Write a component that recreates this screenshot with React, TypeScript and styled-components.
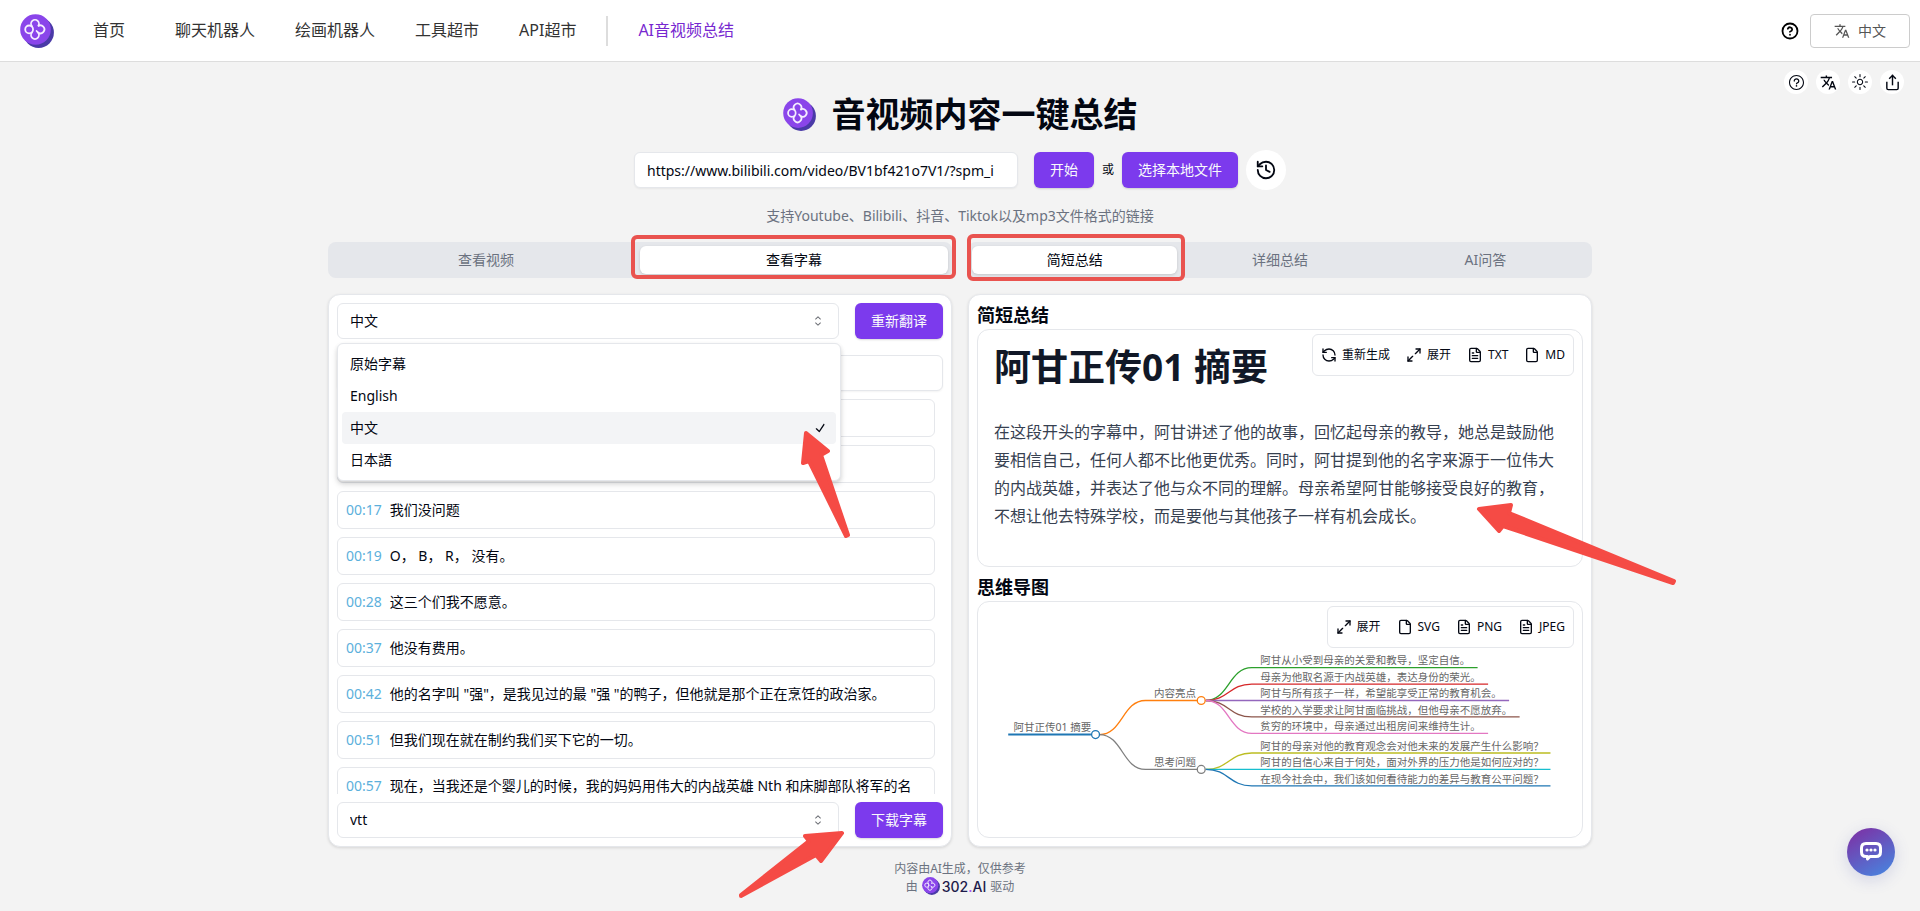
import React from 'react';
import styled, { createGlobalStyle } from 'styled-components';
import { History, RefreshCcw, Maximize2, FileText, File as FileIcon, CircleHelp, Share } from 'lucide-react';
import { RxCaretSort, RxCheck, RxQuestionMarkCircled, RxSun } from 'react-icons/rx';
import { MdTranslate } from 'react-icons/md';

const PURPLE = '#7c3aed';
const LINE = '#e5e7eb';
const INK = '#030712';
const MUTED = '#6b7280';
const MARK = '#f54b45';

const GlobalStyle = createGlobalStyle`
  *, *::before, *::after { box-sizing: border-box; }
  body {
    margin: 0;
    background: #f3f3f3;
    color: ${INK};
    font-family: "Noto Sans", "Noto Sans CJK SC", sans-serif;
    font-size: 14px;
    line-height: 20px;
  }
  button, input, select { font: inherit; color: inherit; margin: 0; }
  h1, h2, p, ul { margin: 0; padding: 0; }
  ul { list-style: none; }
`;

const Header = styled.header`
  display: flex;
  align-items: center;
  height: 62px;
  padding: 0 10px 0 20px;
  background: #fff;
  border-bottom: 1px solid #ddd;
`;

const HomeLink = styled.a`
  display: flex;
  margin-right: 39px;
`;

const Nav = styled.nav`
  display: flex;
  align-items: center;
  gap: 40px;
  flex: 1;
`;

const NavLink = styled.a<{ $active?: boolean; $first?: boolean }>`
  padding-bottom: 2px;
  font-size: 16px;
  line-height: 24px;
  text-decoration: none;
  color: ${(p) => (p.$active ? '#7728d0' : '#333')};
  margin-right: ${(p) => (p.$first ? '10px' : '0')};
`;

const NavDivider = styled.span`
  width: 2px;
  height: 30px;
  margin: 0 -10px;
  background: #ddd;
`;

const HelpLink = styled.a`
  display: flex;
  margin-right: 11px;
  color: #000;
`;

const LanguageButton = styled.button`
  display: flex;
  align-items: center;
  justify-content: center;
  gap: 8px;
  width: 100px;
  height: 34px;
  border: 1px solid #ccc;
  border-radius: 4px;
  background: #fff;
  color: #555;
`;

const Actions = styled.div`
  display: flex;
  justify-content: flex-end;
  gap: 8px;
  padding: 8px 16px 0;
`;

const RoundButton = styled.button<{ $size: number }>`
  display: flex;
  align-items: center;
  justify-content: center;
  flex: none;
  width: ${(p) => p.$size}px;
  height: ${(p) => p.$size}px;
  padding: 0;
  border: 0;
  border-radius: 50%;
  background: #fff;
`;

const Main = styled.main`
  max-width: 1280px;
  margin: 0 auto;
  padding: 0 8px;
`;

const TitleRow = styled.div`
  display: flex;
  align-items: center;
  justify-content: center;
  gap: 16px;
  margin-bottom: 16px;
`;

const Title = styled.h1`
  font-size: 34px;
  line-height: 40px;
  font-weight: 700;
`;

const SourceForm = styled.form`
  display: flex;
  align-items: center;
  justify-content: center;
  gap: 8px;
  margin-bottom: 16px;
`;

const TextInput = styled.input`
  width: 100%;
  height: 36px;
  flex: none;
  padding: 0 12px;
  border: 1px solid ${LINE};
  border-radius: 6px;
  background: #fff;
  box-shadow: 0 1px 2px rgba(0, 0, 0, 0.05);
`;

const UrlInput = styled(TextInput)`
  width: 384px;
  margin-right: 8px;
`;

const PrimaryButton = styled.button`
  flex: none;
  height: 36px;
  padding: 0 16px;
  border: 0;
  border-radius: 6px;
  background: ${PURPLE};
  color: #f9fafb;
  box-shadow: 0 1px 2px rgba(0, 0, 0, 0.15);
`;

const OrText = styled.span`
  font-size: 12px;
`;

const Hint = styled.p`
  margin-bottom: 16px;
  text-align: center;
  color: ${MUTED};
`;

const Columns = styled.div`
  display: grid;
  grid-template-columns: 1fr 1fr;
  gap: 16px;
`;

const TabBar = styled.div`
  display: flex;
  height: 36px;
  padding: 4px;
  border-radius: 8px;
  background: ${LINE};
`;

const Tab = styled.button<{ $active?: boolean }>`
  position: relative;
  flex: 1;
  padding: 0;
  border: 0;
  border-radius: 6px;
  background: ${(p) => (p.$active ? '#fff' : 'transparent')};
  color: ${(p) => (p.$active ? INK : MUTED)};
  box-shadow: ${(p) => (p.$active ? '0 1px 3px rgba(0, 0, 0, 0.15)' : 'none')};
`;

const MarkBox = styled.span<{ $inset: string }>`
  position: absolute;
  inset: ${(p) => p.$inset};
  border: 4px solid #e9534f;
  border-radius: 6px;
  pointer-events: none;
`;

const Panel = styled.section`
  position: relative;
  display: flex;
  flex-direction: column;
  height: calc(100vh - 358px);
  min-height: 553px;
  padding: 8px;
  border: 1px solid ${LINE};
  border-radius: 12px;
  background: #fff;
  box-shadow: 0 1px 3px rgba(0, 0, 0, 0.12);
`;

const PickerRow = styled.div`
  display: flex;
  gap: 16px;
`;

const Picker = styled.div`
  position: relative;
  flex: 1;
`;

const SelectBox = styled.select`
  appearance: none;
  display: block;
  width: 100%;
  height: 36px;
  padding: 0 12px;
  border: 1px solid ${LINE};
  border-radius: 6px;
  background: #fff;
`;

const SelectCaret = styled(RxCaretSort)`
  position: absolute;
  top: 10px;
  right: 13px;
  opacity: 0.6;
  pointer-events: none;
`;

const OptionMenu = styled.ul`
  position: absolute;
  z-index: 1;
  top: 40px;
  left: 0;
  right: -2px;
  padding: 4px;
  border: 1px solid ${LINE};
  border-radius: 6px;
  background: #fff;
  box-shadow: 0 4px 6px rgba(0, 0, 0, 0.1), 0 2px 4px rgba(0, 0, 0, 0.1);
`;

const Option = styled.li<{ $selected: boolean }>`
  display: flex;
  align-items: center;
  justify-content: space-between;
  height: 32px;
  padding: 0 8px;
  border-radius: 4px;
  background: ${(p) => (p.$selected ? '#f3f4f6' : 'transparent')};
`;

const FilterInput = styled(TextInput)`
  margin: 16px 0 8px;
`;

const CueList = styled.ul`
  display: flex;
  flex-direction: column;
  gap: 8px;
  flex: 1;
  min-height: 0;
  margin-bottom: 8px;
  padding-right: 8px;
  overflow: hidden;
`;

const Cue = styled.li`
  display: flex;
  gap: 8px;
  flex: none;
  min-height: 38px;
  padding: 8px;
  border: 1px solid ${LINE};
  border-radius: 6px;
`;

const CueTime = styled.span`
  flex: none;
  color: #5cb0dc;
`;

const CardTitle = styled.h2`
  padding-bottom: 2px;
  font-size: 18px;
  line-height: 24px;
  font-weight: 700;
`;

const Card = styled.div`
  position: relative;
  flex: 1;
  border: 1px solid ${LINE};
  border-radius: 12px;

  & + ${CardTitle} { margin-top: 8px; }
`;

const CardTools = styled.div`
  position: absolute;
  top: 4px;
  right: 8px;
  display: flex;
  gap: 16px;
  padding: 12px 8px;
  border: 1px solid ${LINE};
  border-radius: 6px;
  background: #fff;
`;

const ToolButton = styled.button`
  display: flex;
  align-items: center;
  gap: 5px;
  padding: 0;
  border: 0;
  background: none;
  font-size: 12px;
  line-height: 16px;
`;

const Article = styled.article`
  padding: 16px;
`;

const ArticleTitle = styled.h1`
  margin-bottom: 30px;
  font-size: 37px;
  line-height: 42px;
  font-weight: 700;
  color: #111827;
`;

const ArticleText = styled.p`
  font-size: 16px;
  line-height: 28px;
  color: #374151;
`;

const MindMapSvg = styled.svg`
  display: block;
  width: 100%;
  font-size: 16px;
  fill: none;
  stroke-width: 2;

  text { fill: #666; stroke: none; }
  circle { fill: #fff; }
`;

const Footer = styled.footer`
  display: flex;
  flex-direction: column;
  align-items: center;
  padding: 13px 0 16px;
  font-size: 12px;
  line-height: 17px;
  color: ${MUTED};
`;

const Brand = styled.div`
  display: flex;
  align-items: center;
  gap: 4px;
`;

const BrandName = styled.a`
  display: flex;
  align-items: center;
  gap: 2px;
  font-family: Inter, "Noto Sans", sans-serif;
  font-size: 14px;
  font-weight: 500;
  text-decoration: none;
  color: #1e1b4b;
`;

const BrandDot = styled.span`
  color: #a855f7;
`;

const ChatButton = styled.button`
  position: fixed;
  right: 25px;
  bottom: 35px;
  display: flex;
  align-items: center;
  justify-content: center;
  width: 48px;
  height: 48px;
  padding: 0;
  border: 0;
  border-radius: 50%;
  background: linear-gradient(150deg, #7a35a8 10%, #4a80dc 90%);
  box-shadow: 0 4px 16px rgba(80, 90, 180, 0.2);
`;

const ArrowSvg = styled.svg<{ $left: number; $top: number }>`
  position: absolute;
  z-index: 2;
  left: ${(p) => p.$left}px;
  top: ${(p) => p.$top}px;
  overflow: visible;
  pointer-events: none;
  fill: ${MARK};
  stroke: ${MARK};
  stroke-width: 4;
  stroke-linejoin: round;
`;

function Logo({ size }: { size: number }) {
  return (
    <svg width={size} height={size} viewBox="0 0 32 32" aria-hidden="true">
      <circle cx="17.5" cy="17.5" r="14.4" fill="#4a3aa7" />
      <circle cx="14.6" cy="14.6" r="14.4" fill="#8a45ea" />
      <g fill="none" stroke="#f5eeff" strokeWidth="1.7" strokeLinecap="round">
        <path d="M11.3 11.6A3.7 3.7 0 1 1 16.9 11.6A3.7 3.7 0 1 1 16.9 17.4A3.7 3.7 0 1 1 11.3 17.4" />
        <circle cx="8.6" cy="14.5" r="3.7" />
        <path d="M16.9 17.4L15.6 16" />
      </g>
    </svg>
  );
}

const languages = ['原始字幕', 'English', '中文', '日本語'];

const cues = [
  ['', ''],
  ['', ''],
  ['00:17', '我们没问题'],
  ['00:19', 'O， B， R， 没有。'],
  ['00:28', '这三个们我不愿意。'],
  ['00:37', '他没有费用。'],
  ['00:42', '他的名字叫 "强"，是我见过的最 "强 "的鸭子，但他就是那个正在烹饪的政治家。'],
  ['00:51', '但我们现在就在制约我们买下它的一切。'],
  ['00:57', '现在，当我还是个婴儿的时候，我的妈妈用伟大的内战英雄 Nth 和床脚部队将军的名'],
];

const branches = [
  {
    label: '内容亮点',
    y: 150,
    color: '#ff7f0e',
    leaves: [
      { text: '阿甘从小受到母亲的关爱和教导，坚定自信。', y: 100, end: 761, color: '#2ca02c' },
      { text: '母亲为他取名源于内战英雄，表达身份的荣光。', y: 125, end: 777, color: '#d62728' },
      { text: '阿甘与所有孩子一样，希望能享受正常的教育机会。', y: 150, end: 809, color: '#9467bd' },
      { text: '学校的入学要求让阿甘面临挑战，但他母亲不愿放弃。', y: 175, end: 825, color: '#8c564b' },
      { text: '贫穷的环境中，母亲通过出租房间来维持生计。', y: 200, end: 777, color: '#e377c2' },
    ],
  },
  {
    label: '思考问题',
    y: 255,
    color: '#7f7f7f',
    leaves: [
      { text: '阿甘的母亲对他的教育观念会对他未来的发展产生什么影响？', y: 230, end: 872, color: '#bcbd22' },
      { text: '阿甘的自信心来自于何处，面对外界的压力他是如何应对的？', y: 255, end: 872, color: '#17becf' },
      { text: '在现今社会中，我们该如何看待能力的差异与教育公平问题？', y: 280, end: 872, color: '#1f77b4' },
    ],
  },
];

function MindMap() {
  return (
    <MindMapSvg viewBox="0 0 920 340" role="img" aria-label="思维导图">
      <path d="M46 202H172" stroke="#1f77b4" strokeWidth="3" />
      <text x="54" y="197">阿甘正传01 摘要</text>
      {branches.map((b) => (
        <g key={b.label}>
          <path d={`M185 202C220 202 220 ${b.y} 255 ${b.y}H334`} stroke={b.color} />
          <text x="268" y={b.y - 5}>{b.label}</text>
          {b.leaves.map((l) => (
            <g key={l.text}>
              <path d={`M347 ${b.y}C382 ${b.y} 382 ${l.y} 417 ${l.y}H${l.end}`} stroke={l.color} />
              <text x="430" y={l.y - 5}>{l.text}</text>
            </g>
          ))}
          <circle cx="340" cy={b.y} r="6" stroke={b.color} />
        </g>
      ))}
      <circle cx="179" cy="202" r="6" stroke="#1f77b4" />
    </MindMapSvg>
  );
}

export default function App() {
  return (
    <>
      <GlobalStyle />
      <Header>
        <HomeLink href="#" aria-label="302.AI"><Logo size={34} /></HomeLink>
        <Nav>
          <NavLink href="#" $first>首页</NavLink>
          <NavLink href="#">聊天机器人</NavLink>
          <NavLink href="#">绘画机器人</NavLink>
          <NavLink href="#">工具超市</NavLink>
          <NavLink href="#">API超市</NavLink>
          <NavDivider />
          <NavLink href="#" $active>AI音视频总结</NavLink>
        </Nav>
        <HelpLink href="#" aria-label="帮助"><CircleHelp size={18} strokeWidth={2.4} /></HelpLink>
        <LanguageButton><MdTranslate size={16} />中文</LanguageButton>
      </Header>

      <Actions>
        <RoundButton $size={24} aria-label="帮助"><RxQuestionMarkCircled size={17} /></RoundButton>
        <RoundButton $size={24} aria-label="语言"><MdTranslate size={17} /></RoundButton>
        <RoundButton $size={24} aria-label="主题"><RxSun size={16} /></RoundButton>
        <RoundButton $size={24} aria-label="分享"><Share size={17} strokeLinecap="square" strokeLinejoin="miter" /></RoundButton>
      </Actions>

      <Main>
        <TitleRow>
          <Logo size={33} />
          <Title>音视频内容一键总结</Title>
        </TitleRow>

        <SourceForm onSubmit={(e) => e.preventDefault()}>
          <UrlInput aria-label="视频链接" defaultValue="https://www.bilibili.com/video/BV1bf421o7V1/?spm_i" />
          <PrimaryButton type="submit">开始</PrimaryButton>
          <OrText>或</OrText>
          <PrimaryButton type="button">选择本地文件</PrimaryButton>
          <RoundButton type="button" $size={40} aria-label="历史记录"><History size={22} /></RoundButton>
        </SourceForm>
        <Hint>支持Youtube、Bilibili、抖音、Tiktok以及mp3文件格式的链接</Hint>

        <Columns>
          <TabBar role="tablist">
            <Tab role="tab">查看视频</Tab>
            <Tab role="tab" aria-selected $active>
              查看字幕
              <MarkBox $inset="-11px -8px -5px -9px" />
            </Tab>
          </TabBar>
          <TabBar role="tablist">
            <Tab role="tab" aria-selected $active>
              简短总结
              <MarkBox $inset="-12px -8px -7px -5px" />
            </Tab>
            <Tab role="tab">详细总结</Tab>
            <Tab role="tab">AI问答</Tab>
          </TabBar>

          <Panel>
            <PickerRow>
              <Picker>
                <SelectBox aria-label="字幕语言" defaultValue="中文">
                  {languages.map((l) => <option key={l}>{l}</option>)}
                </SelectBox>
                <SelectCaret size={16} />
                <OptionMenu role="listbox" aria-label="字幕语言">
                  {languages.map((l) => (
                    <Option key={l} role="option" aria-selected={l === '中文'} $selected={l === '中文'}>
                      {l}
                      {l === '中文' && <RxCheck size={16} />}
                    </Option>
                  ))}
                </OptionMenu>
              </Picker>
              <PrimaryButton>重新翻译</PrimaryButton>
            </PickerRow>
            <FilterInput aria-label="搜索字幕" />
            <CueList>
              {cues.map(([time, text], i) => (
                <Cue key={i}>
                  <CueTime>{time}</CueTime>
                  <span>{text}</span>
                </Cue>
              ))}
            </CueList>
            <PickerRow>
              <Picker>
                <SelectBox aria-label="字幕格式" defaultValue="vtt">
                  <option>vtt</option>
                </SelectBox>
                <SelectCaret size={16} />
              </Picker>
              <PrimaryButton>下载字幕</PrimaryButton>
            </PickerRow>
            <ArrowSvg $left={472} $top={136} width="48" height="106" aria-hidden="true">
              <path d="M5 2L27 20L20 24L47 104L45 105L8 30L2 32Z" />
            </ArrowSvg>
            <ArrowSvg $left={410} $top={535} width="106" height="68" aria-hidden="true">
              <path d="M103 3L66 6L70 11L2 65L2 66L77 25L82 31Z" />
            </ArrowSvg>
          </Panel>

          <Panel>
            <CardTitle>简短总结</CardTitle>
            <Card>
              <CardTools>
                <ToolButton><RefreshCcw size={16} />重新生成</ToolButton>
                <ToolButton><Maximize2 size={16} />展开</ToolButton>
                <ToolButton><FileText size={16} />TXT</ToolButton>
                <ToolButton><FileIcon size={16} />MD</ToolButton>
              </CardTools>
              <Article>
                <ArticleTitle>阿甘正传01 摘要</ArticleTitle>
                <ArticleText>
                  在这段开头的字幕中，阿甘讲述了他的故事，回忆起母亲的教导，她总是鼓励他要相信自己，任何人都不比他更优秀。同时，阿甘提到他的名字来源于一位伟大的内战英雄，并表达了他与众不同的理解。母亲希望阿甘能够接受良好的教育，不想让他去特殊学校，而是要他与其他孩子一样有机会成长。
                </ArticleText>
              </Article>
            </Card>
            <CardTitle>思维导图</CardTitle>
            <Card>
              <MindMap />
              <CardTools>
                <ToolButton><Maximize2 size={16} />展开</ToolButton>
                <ToolButton><FileIcon size={16} />SVG</ToolButton>
                <ToolButton><FileText size={16} />PNG</ToolButton>
                <ToolButton><FileText size={16} />JPEG</ToolButton>
              </CardTools>
            </Card>
            <ArrowSvg $left={508} $top={208} width="198" height="82" aria-hidden="true">
              <path d="M2 6L34 2L32 10L197 78L196 80L26 23L22 28Z" />
            </ArrowSvg>
          </Panel>
        </Columns>
      </Main>

      <Footer>
        <span>内容由AI生成，仅供参考</span>
        <Brand>
          由
          <BrandName href="#"><Logo size={18} /><span>302<BrandDot>.</BrandDot>AI</span></BrandName>
          驱动
        </Brand>
      </Footer>

      <ChatButton aria-label="在线客服">
        <svg width="24" height="22" viewBox="0 0 24 22" aria-hidden="true">
          <path d="M7 2.5H17Q21.5 2.5 21.5 7V11Q21.5 15.5 17 15.5H11L8.5 18V15.5H7Q2.5 15.5 2.5 11V7Q2.5 2.5 7 2.5Z" fill="none" stroke="#fff" strokeWidth="3" strokeLinejoin="round" />
          <circle cx="8" cy="9" r="1.6" fill="#fff" />
          <circle cx="12" cy="9" r="1.6" fill="#fff" />
          <circle cx="16" cy="9" r="1.6" fill="#fff" />
        </svg>
      </ChatButton>
    </>
  );
}
